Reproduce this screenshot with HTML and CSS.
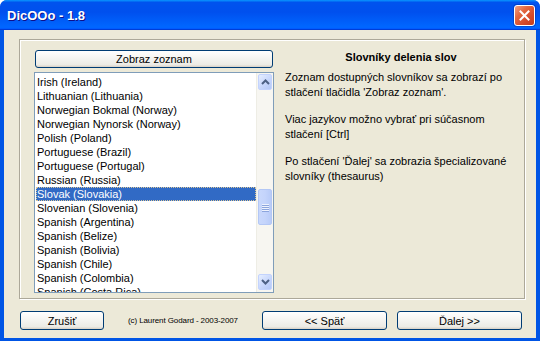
FILE: index.html
```html
<!DOCTYPE html>
<html lang="sk">
<head>
    <title>DicOOo - 1.8</title>
    <meta charset="utf-8">
    <link rel="stylesheet" href="styles.css">
</head>
<body>
    <div class="window">
        <!-- Title bar -->
        <div class="titlebar">
            <span class="title">DicOOo - 1.8</span>
            <span class="close-btn">
                <svg width="11" height="11" viewBox="0 0 11 11"><path d="M1.5 1.5 L9.5 9.5 M9.5 1.5 L1.5 9.5" stroke="#fff" stroke-width="2" stroke-linecap="square"/></svg>
            </span>
        </div>

        <div class="client">
            <div class="group">
                <!-- Left column: button + list -->
                <div class="left-col">
                    <button class="btn btn-list">Zobraz zoznam</button>
                    <div class="listbox">
                        <ul class="items">
                            <li>Irish (Ireland)</li>
                            <li>Lithuanian (Lithuania)</li>
                            <li>Norwegian Bokmal (Norway)</li>
                            <li>Norwegian Nynorsk (Norway)</li>
                            <li>Polish (Poland)</li>
                            <li>Portuguese (Brazil)</li>
                            <li>Portuguese (Portugal)</li>
                            <li>Russian (Russia)</li>
                            <li class="selected">Slovak (Slovakia)</li>
                            <li>Slovenian (Slovenia)</li>
                            <li>Spanish (Argentina)</li>
                            <li>Spanish (Belize)</li>
                            <li>Spanish (Bolivia)</li>
                            <li>Spanish (Chile)</li>
                            <li>Spanish (Colombia)</li>
                            <li>Spanish (Costa Rica)</li>
                        </ul>
                        <div class="scrollbar">
                            <div class="sb-btn">
                                <svg width="9" height="6" viewBox="0 0 9 6"><path d="M1 5 L4.5 1.5 L8 5" fill="none" stroke="#4d6185" stroke-width="2"/></svg>
                            </div>
                            <div class="sb-track">
                                <div class="sb-thumb">
                                    <span></span><span></span><span></span><span></span>
                                </div>
                            </div>
                            <div class="sb-btn">
                                <svg width="9" height="6" viewBox="0 0 9 6"><path d="M1 1 L4.5 4.5 L8 1" fill="none" stroke="#4d6185" stroke-width="2"/></svg>
                            </div>
                        </div>
                    </div>
                </div>

                <!-- Right column: help text -->
                <div class="info">
                    <h2>Slovníky delenia slov</h2>
                    <p>Zoznam dostupných slovníkov sa zobrazí po stlačení tlačidla 'Zobraz zoznam'.</p>
                    <p>Viac jazykov možno vybrať pri súčasnom stlačení [Ctrl]</p>
                    <p>Po stlačení 'Ďalej' sa zobrazia špecializované slovníky (thesaurus)</p>
                </div>
            </div>

            <!-- Bottom buttons -->
            <div class="footer">
                <button class="btn btn-cancel">Zrušiť</button>
                <span class="copyright">(c) Laurent Godard - 2003-2007</span>
                <button class="btn btn-nav btn-back">&lt;&lt; Späť</button>
                <button class="btn btn-nav">Ďalej &gt;&gt;</button>
            </div>
        </div>
    </div>
</body>
</html>
```

FILE: styles.css
```css
html, body {
    margin: 0;
    padding: 0;
}
body {
    width: 540px;
    height: 341px;
    overflow: hidden;
    font-family: "Liberation Sans", Arial, sans-serif;
    font-size: 11px;
    color: #000;
}
.window {
    width: 540px;
    height: 341px;
    display: flex;
    flex-direction: column;
    background-color: #0055e5;
    border-radius: 7px 7px 0 0;
    overflow: hidden;
}
.titlebar {
    height: 30px;
    flex: 0 0 30px;
    display: flex;
    align-items: center;
    justify-content: space-between;
    padding: 0 5px 0 7px;
    background: linear-gradient(180deg, #0997ff 0, #0053ee 8%, #0050ee 40%, #0066ff 88%, #0066ff 93%, #005bff 95%, #003dd7 96%, #003dd7 100%);
}
.title {
    color: #fff;
    font-weight: bold;
    font-size: 13px;
    text-shadow: 1px 1px #0f1089;
    padding-top: 1px;
}
.close-btn {
    width: 19px;
    height: 19px;
    display: flex;
    align-items: center;
    justify-content: center;
    border: 1px solid #fff;
    border-radius: 3px;
    background: linear-gradient(135deg, #f0a084 0%, #e3673f 35%, #d5492a 70%, #c43d1c 100%);
    box-shadow: 0 0 0 1px rgba(0, 40, 160, 0.4);
}
.client {
    flex: 1;
    margin: 0 4px 3px 4px;
    background-color: #ece9d8;
    display: flex;
    flex-direction: column;
}

/* Group frame */
.group {
    margin: 9px 0 0 15px;
    width: 506px;
    height: 260px;
    border: 1px solid #aca899;
    box-shadow: inset 1px 1px #fff, 1px 1px #fff;
    display: flex;
    padding: 10px 0 0 14px;
    box-sizing: border-box;
}
.left-col {
    width: 240px;
    display: flex;
    flex-direction: column;
}

/* XP buttons */
.btn {
    font-family: "Liberation Sans", Arial, sans-serif;
    font-size: 11px;
    color: #000;
    border: 1px solid #003c74;
    border-radius: 3px;
    background: linear-gradient(180deg, #fff 0, #ecebe5 86%, #d8d0c4 100%);
    padding: 0;
    box-sizing: border-box;
}
.btn-list {
    height: 18px;
    margin: 0 0 4px 1px;
    width: 238px;
}

/* List box */
.listbox {
    height: 221px;
    border: 1px solid #7f9db9;
    background-color: #fff;
    box-sizing: border-box;
    display: flex;
}
.items {
    flex: 1;
    list-style: none;
    margin: 0;
    padding: 2px 0 0 1px;
    overflow: hidden;
}
.items li {
    height: 14px;
    line-height: 14px;
    padding-left: 1px;
    white-space: nowrap;
}
.items li.selected {
    background-color: #316ac5;
    color: #fff;
    outline: 1px dotted #d8c69a;
    outline-offset: -1px;
}
.scrollbar {
    width: 17px;
    display: flex;
    flex-direction: column;
    background-color: #f7f6f1;
    border-left: 1px solid #eeede5;
    box-sizing: border-box;
}
.sb-btn {
    height: 17px;
    margin: 1px 1px 0 1px;
    flex: 0 0 16px;
    display: flex;
    align-items: center;
    justify-content: center;
    border: 1px solid #c3d3fd;
    border-radius: 2px;
    background: linear-gradient(135deg, #e6eeff 0%, #c5d5fc 60%, #b4c8f6 100%);
    box-sizing: border-box;
}
.sb-btn:last-child {
    margin: 0 1px 2px 1px;
}
.sb-track {
    flex: 1;
}
.sb-thumb {
    margin: 99px 1px 0 1px;
    height: 36px;
    border: 1px solid #b3c7f5;
    border-radius: 2px;
    background: linear-gradient(90deg, #c9d8fc 0%, #c4d4fb 50%, #b8cbf8 100%);
    display: flex;
    flex-direction: column;
    align-items: center;
    justify-content: center;
    gap: 1px;
    box-sizing: border-box;
}
.sb-thumb span {
    width: 7px;
    height: 1px;
    background-color: #eef2fd;
    box-shadow: 0 1px #8ca5dd;
}

/* Help text */
.info {
    width: 232px;
    margin-left: 11px;
}
.info h2 {
    margin: 0 0 6px 0;
    font-size: 11px;
    font-weight: bold;
    text-align: center;
    line-height: 14px;
}
.info p {
    margin: 0 0 12px 0;
    line-height: 15px;
}

/* Footer */
.footer {
    display: flex;
    align-items: center;
    margin-top: 12px;
    padding: 0 14px 0 16px;
}
.footer .btn {
    height: 19px;
}
.btn-cancel {
    width: 84px;
}
.copyright {
    margin-left: 24px;
    font-size: 8px;
    letter-spacing: -0.1px;
    padding-bottom: 1px;
}
.btn-nav {
    width: 125px;
    margin-left: 10px;
}
.btn-back {
    margin-left: auto;
}
```
